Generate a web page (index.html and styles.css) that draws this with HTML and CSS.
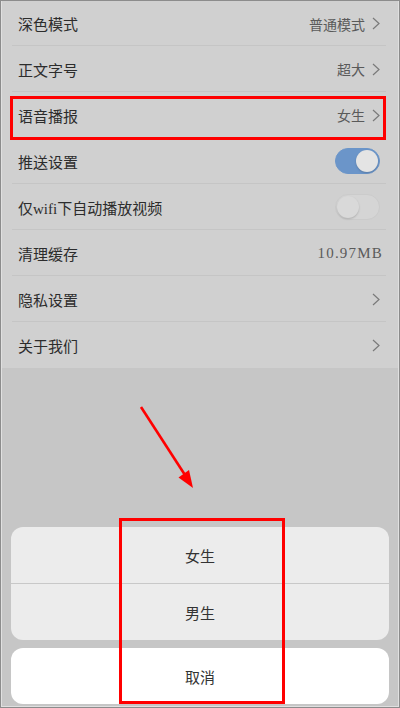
FILE: index.html
```html
<!DOCTYPE html>
<html lang="zh-CN">
<head>
<meta charset="utf-8">
<title>设置</title>
<link rel="stylesheet" href="styles.css">
</head>
<body>
<div class="phone">
  <div class="screen">
    <ul class="settings">
      <li class="row"><span class="label">深色模式</span><span class="value">普通模式</span><svg class="chev" viewBox="0 0 8 13"><path d="M1 1l6 5.5L1 12"/></svg></li>
      <li class="row"><span class="label">正文字号</span><span class="value">超大</span><svg class="chev" viewBox="0 0 8 13"><path d="M1 1l6 5.5L1 12"/></svg></li>
      <li class="row"><span class="label">语音播报</span><span class="value">女生</span><svg class="chev" viewBox="0 0 8 13"><path d="M1 1l6 5.5L1 12"/></svg></li>
      <li class="row"><span class="label">推送设置</span><span class="switch on"><i></i></span></li>
      <li class="row"><span class="label">仅wifi下自动播放视频</span><span class="switch"><i></i></span></li>
      <li class="row"><span class="label">清理缓存</span><span class="value size">10.97MB</span></li>
      <li class="row"><span class="label">隐私设置</span><svg class="chev" viewBox="0 0 8 13"><path d="M1 1l6 5.5L1 12"/></svg></li>
      <li class="row"><span class="label">关于我们</span><svg class="chev" viewBox="0 0 8 13"><path d="M1 1l6 5.5L1 12"/></svg></li>
    </ul>
    <div class="backdrop"></div>
    <div class="sheet">
      <div class="sheet-group">
        <div class="sheet-item">女生</div>
        <div class="sheet-item">男生</div>
      </div>
      <div class="sheet-cancel">取消</div>
    </div>
  </div>
  <div class="mark mark-row"></div>
  <div class="mark mark-sheet"></div>
  <svg class="arrow" viewBox="0 0 400 708">
    <line x1="141" y1="407" x2="185" y2="475"/>
    <polygon points="193,488 178.5,477.5 189,470"/>
  </svg>
</div>
</body>
</html>
```

FILE: styles.css
```css
html, body
        {
        margin:0;
        padding:0;
        }
body
        {
        font-family:"Liberation Serif", "Noto Sans CJK SC", serif;
        color:#2c2c2c;
        }
.phone
        {
        position:relative;
        width:400px;
        height:708px;
        box-sizing:border-box;
        border:1px solid #8c8c8c;
        padding:0 1px 1px;
        background:#e0e0e0;
        }
.screen
        {
        height:100%;
        display:flex;
        flex-direction:column;
        background:#c6c6c6;
        }
.settings
        {
        list-style:none;
        margin:0;
        padding:0;
        background:#d0d0d0;
        }
.row
        {
        position:relative;
        height:46px;
        display:flex;
        align-items:center;
        padding:0 18px 0 16px;
        font-size:15px;
        }
.row:first-child
        {
        height:45px;
        }
.row::after
        {
        content:"";
        position:absolute;
        left:10px;
        right:12px;
        bottom:0;
        height:1px;
        background:#c5c5c5;
        }
.row:last-child::after
        {
        display:none;
        }
.label
        {
        flex:1;
        }
.value
        {
        font-size:14px;
        color:#5a5a5a;
        }
.size
        {
        font-size:15px;
        letter-spacing:1.2px;
        margin-right:-3px;
        }
.chev
        {
        width:8px;
        height:13px;
        margin-left:7px;
        fill:none;
        stroke:#7a7a7a;
        stroke-width:1.2;
        }
.switch
        {
        position:relative;
        width:45px;
        height:26px;
        box-sizing:border-box;
        border-radius:13px;
        background:#d5d5d5;
        border:1px solid #cbcbcb;
        }
.switch i
        {
        position:absolute;
        left:1px;
        top:1px;
        width:22px;
        height:22px;
        border-radius:50%;
        background:#d9d9d9;
        box-shadow:0 1px 2px rgba(0,0,0,0.18);
        }
.switch.on
        {
        background:#6b95c9;
        border-color:#6b95c9;
        }
.switch.on i
        {
        left:auto;
        right:1px;
        background:#e4e4e4;
        }
.backdrop
        {
        flex:1;
        }
.sheet
        {
        padding:0 9px 2px;
        display:flex;
        flex-direction:column;
        gap:8px;
        font-family:"Noto Sans CJK SC", sans-serif;
        font-size:15px;
        color:#333;
        }
.sheet-group
        {
        background:#ececec;
        border-radius:12px;
        overflow:hidden;
        }
.sheet-item
        {
        height:56px;
        display:flex;
        align-items:center;
        justify-content:center;
        }
.sheet-item + .sheet-item
        {
        border-top:1px solid #c8c8c8;
        }
.sheet-cancel
        {
        height:56px;
        display:flex;
        align-items:center;
        justify-content:center;
        background:#fff;
        border-radius:12px;
        }
.mark
        {
        position:absolute;
        border:3px solid #ff0000;
        box-sizing:border-box;
        }
.mark-row
        {
        left:9px;
        top:95px;
        width:376px;
        height:44px;
        }
.mark-sheet
        {
        left:118px;
        top:517px;
        width:166px;
        height:186px;
        }
.arrow
        {
        position:absolute;
        left:-1px;
        top:-1px;
        width:400px;
        height:708px;
        }
.arrow line
        {
        stroke:#ff0000;
        stroke-width:2.6;
        }
.arrow polygon
        {
        fill:#ff0000;
        }
```
